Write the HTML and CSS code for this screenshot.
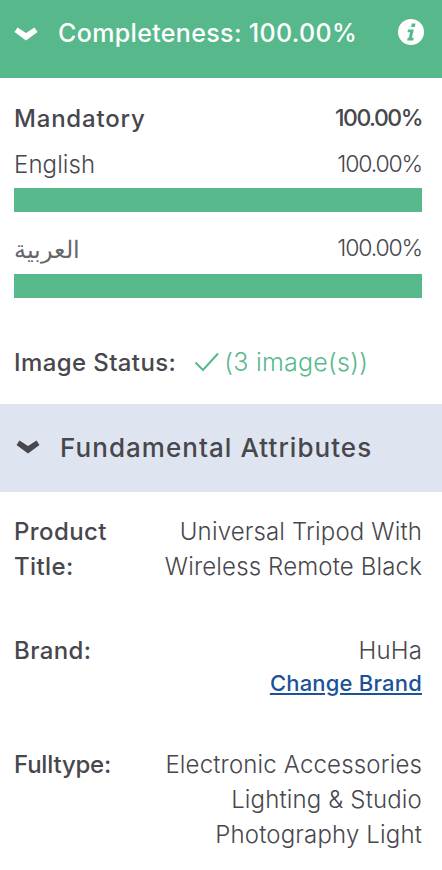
FILE: index.html
```html
<!DOCTYPE html>
<html lang="en">
<head>
<meta charset="utf-8">
<title>Completeness</title>
<link rel="stylesheet" href="styles.css">
</head>
<body>
<header class="head head-green">
  <svg class="chev" viewBox="0 0 24 14" aria-hidden="true"><path d="M3.500.5 12 6l8.500-5.500 3 4.500L12 13.500.5 5z" fill="currentColor"/></svg>
  <h1 class="head-title">Completeness: 100.00%</h1>
  <svg class="info" viewBox="0 0 26 26" aria-hidden="true"><circle cx="13" cy="13" r="13" fill="#fff"/><path d="M13.800 4.500h3.700l-.7 3.500h-3.700zM10 10.500h5.800l-1.900 8.300h1.800l-.5 2.700H9.200l.5-2.700h1.100l1.300-5.500H9.500z" fill="#57b98b"/></svg>
</header>
<section class="scores">
  <div class="row strong"><span class="row-name">Mandatory</span><span class="row-num">100.00%</span></div>
  <div class="row lang"><span class="row-name">English</span><span class="row-num">100.00%</span></div>
  <div class="bar"></div>
  <div class="row lang-ar"><span class="ar" lang="ar">العربية</span><span class="row-num">100.00%</span></div>
  <div class="bar bar-ar"></div>
  <div class="status">
    <span class="status-label">Image Status:</span>
    <svg class="check" viewBox="0 0 25 20" aria-hidden="true"><path d="M1.500 10.500 9 18 24 1.500" fill="none" stroke="currentColor" stroke-width="2"/></svg>
    <span class="status-value">(3 image(s))</span>
  </div>
</section>
<header class="head head-blue">
  <svg class="chev" viewBox="0 0 24 14" aria-hidden="true"><path d="M3.500.5 12 6l8.500-5.500 3 4.500L12 13.500.5 5z" fill="currentColor"/></svg>
  <h2 class="head-title">Fundamental Attributes</h2>
</header>
<section class="attrs">
  <div class="attr attr-title">
    <div class="attr-label">Product Title:</div>
    <div class="attr-value">Universal Tripod With<br>Wireless Remote Black</div>
  </div>
  <div class="attr attr-brand">
    <div class="attr-label">Brand:</div>
    <div class="attr-value">HuHa<a class="link" href="#">Change Brand</a></div>
  </div>
  <div class="attr">
    <div class="attr-label attr-label-tight">Fulltype:</div>
    <div class="attr-value">Electronic Accessories<br>Lighting &amp; Studio<br>Photography Light</div>
  </div>
</section>
</body>
</html>
```
FILE: styles.css
```css
* { box-sizing: border-box; }
html, body { margin: 0; padding: 0; }
body {
  width: 442px;
  height: 870px;
  overflow: hidden;
  background: #fff;
  color: #47474d;
  font-family: Inter, "Noto Sans", sans-serif;
}
.head { display: flex; align-items: center; margin: 0; }
.head-green { height: 78px; background: #57b98b; color: #fff; padding: 0 18px 10px 14px; }
.head-blue { height: 88px; background: #dfe5f0; color: #47474d; padding: 0 14px 2px 16px; }
.chev { width: 24px; height: 14px; flex: none; }
.head-title { margin: 0; font-size: 25px; font-weight: 500; white-space: nowrap; }
.head-green .head-title { margin-left: 20px; letter-spacing: .35px; flex: 1; margin-top: -2px; }
.head-blue .head-title { margin-left: 20px; font-size: 26px; letter-spacing: 1.05px; }
.info { width: 26px; height: 26px; flex: none; margin-top: -4px; }
.scores { padding: 26px 20px 26px 14px; }
.row { display: flex; justify-content: space-between; align-items: center; height: 28px; font-size: 24px; font-weight: 300; }
.row-num { font-size: 23px; letter-spacing: -1.15px; }
.strong { font-weight: 500; }
.strong .row-name { letter-spacing: .8px; }
.strong .row-num { letter-spacing: -1.5px; }
.row-name { letter-spacing: .1px; }
.lang { margin-top: 18px; }
.lang-ar { margin-top: 22px; }
.ar { font-family: "Noto Sans", "DejaVu Sans", sans-serif; font-size: 24px; color: #66666c; }
.bar { height: 24px; margin-top: 10px; background: #57b98b; }
.bar-ar { margin-top: 12px; }
.status { display: flex; align-items: center; height: 32px; margin-top: 48px; }
.status-label { font-size: 24px; font-weight: 500; letter-spacing: .4px; }
.check { width: 25px; height: 20px; margin-left: 18px; color: #57b98b; flex: none; }
.status-value { margin-left: 5px; font-size: 25px; font-weight: 300; letter-spacing: .25px; color: #57b98b; }
.attrs { padding: 22px 20px 0 14px; }
.attr { display: flex; justify-content: space-between; font-size: 24px; line-height: 35px; margin-bottom: 49px; }
.attr-brand { margin-bottom: 46px; }
.attr-label { font-weight: 500; width: 120px; flex: none; letter-spacing: .4px; }
.attr-label-tight { letter-spacing: -.2px; }
.attr-value { font-weight: 300; text-align: right; white-space: nowrap; letter-spacing: .15px; }
.link { display: block; margin-top: -2px; font-size: 22px; letter-spacing: .2px; color: #1c5296; font-weight: 500; }
```
